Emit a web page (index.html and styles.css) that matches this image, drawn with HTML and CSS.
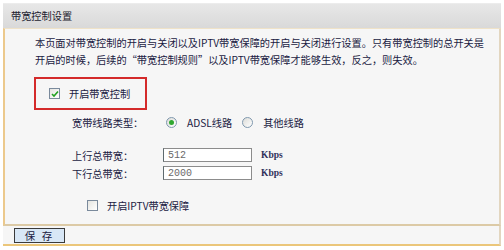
FILE: index.html
```html
<!DOCTYPE html>
<html lang="zh-CN">
<head>
  <meta charset="utf-8">
  <title>带宽控制设置</title>
  <link rel="stylesheet" href="styles.css">
</head>
<body>
  <div class="panel">
    <div class="panel-head">带宽控制设置</div>

    <div class="panel-body">
      <p class="intro">
        本页面对带宽控制的开启与关闭以及IPTV带宽保障的开启与关闭进行设置。只有带宽控制的总开关是<br>
        开启的时候，后续的“带宽控制规则”以及IPTV带宽保障才能够生效，反之，则失效。
      </p>

      <div class="main-switch">
        <span class="check checked">
          <svg width="8" height="8" viewBox="0 0 8 8"><path d="M1 4 L3 6 L7 1.5" fill="none" stroke="#21a121" stroke-width="1.6"/></svg>
        </span>
        <span class="switch-label">开启带宽控制</span>
      </div>

      <div class="form-row line-type">
        <span class="field-label">宽带线路类型：</span>
        <span class="radio checked"></span>
        <span class="radio-label">ADSL线路</span>
        <span class="radio"></span>
        <span class="radio-label">其他线路</span>
      </div>

      <div class="form-row speed-row">
        <span class="field-label">上行总带宽：</span>
        <input class="speed" type="text" value="512">
        <span class="unit">Kbps</span>
      </div>
      <div class="form-row speed-row">
        <span class="field-label">下行总带宽：</span>
        <input class="speed" type="text" value="2000">
        <span class="unit">Kbps</span>
      </div>

      <div class="iptv-row">
        <span class="check"></span>
        <span class="switch-label">开启IPTV带宽保障</span>
      </div>
    </div>

    <div class="panel-foot">
      <button class="save-btn">保 存</button>
    </div>
  </div>
</body>
</html>
```

FILE: styles.css
```css
body {
  margin: 0;
  background-color: #ffffff;
  font-family: "Noto Sans CJK SC", "DejaVu Sans", sans-serif;
  font-size: 10.2px;
  color: #1a1a42;
}
.panel {
  width: 498px;
  margin: 3px 0 0 3px;
}
.panel-head {
  height: 24px;
  line-height: 24px;
  padding-left: 8px;
  background: linear-gradient(#e7e7e7, #d9d9d9);
  border-top: 1px solid #ececec;
  color: #1c1c30;
}
.panel-body {
  background-color: #f6f6f6;
  border-left: 2px solid #ecc98c;
  border-right: 2px solid #e2d6c0;
  border-top: 1px solid #efe2c8;
  border-bottom: 2px solid #dccaa6;
  padding: 5px 0 11px 30px;
}
.intro {
  margin: 0;
  line-height: 17px;
}
.main-switch {
  display: flex;
  align-items: center;
  width: 96px;
  height: 29px;
  margin: 9px 0 0 -1px;
  padding-left: 13px;
  border: 2px solid #d42a2a;
}
.check {
  display: inline-flex;
  align-items: center;
  justify-content: center;
  width: 9px;
  height: 9px;
  border: 1px solid #7a8a9c;
  background: linear-gradient(135deg, #e4e4e0, #ffffff);
}
.switch-label {
  margin-left: 9px;
}
.form-row {
  display: flex;
  align-items: center;
  padding-left: 37px;
}
.field-label {
  width: 91px;
}
.line-type {
  margin-top: 5px;
  height: 14px;
}
.radio {
  width: 9px;
  height: 9px;
  border: 1px solid #7f98ae;
  border-radius: 50%;
  background: linear-gradient(135deg, #dcdcd8, #ffffff);
  display: inline-flex;
  align-items: center;
  justify-content: center;
  margin-left: 3px;
}
.radio.checked::after {
  content: "";
  width: 5px;
  height: 5px;
  border-radius: 50%;
  background-color: #2fa82f;
}
.radio-label {
  margin-left: 10px;
  margin-right: 7px;
}
.speed-row {
  height: 18px;
}
.line-type + .speed-row {
  margin-top: 17px;
}
.speed {
  width: 83px;
  height: 12px;
  padding: 0 0 0 4px;
  margin: 0;
  border: 1px solid #8c8c8c;
  border-left-color: #5e6a6e;
  background-color: #ffffff;
  font-family: "Liberation Mono", monospace;
  font-size: 10px;
  color: #6a6a6a;
}
.unit {
  margin-left: 9px;
  font-family: "Liberation Serif", serif;
  font-weight: bold;
  font-size: 9.5px;
  color: #30305a;
}
.iptv-row {
  display: flex;
  align-items: center;
  margin: 16px 0 0 52px;
}
.panel-foot {
  background-color: #f6f6f6;
  border-right: 2px solid #e2d6c0;
  border-bottom: 2px solid #ebc67a;
  padding: 2px 0 1px 11px;
  height: 15px;
}
.save-btn {
  width: 51px;
  height: 15px;
  padding: 0;
  border: 1px solid #3a3a3a;
  background-color: #d8e7f6;
  font-family: "Noto Sans CJK SC", sans-serif;
  font-size: 10.5px;
  line-height: 13px;
  color: #1a1a42;
  letter-spacing: 2px;
}
```
